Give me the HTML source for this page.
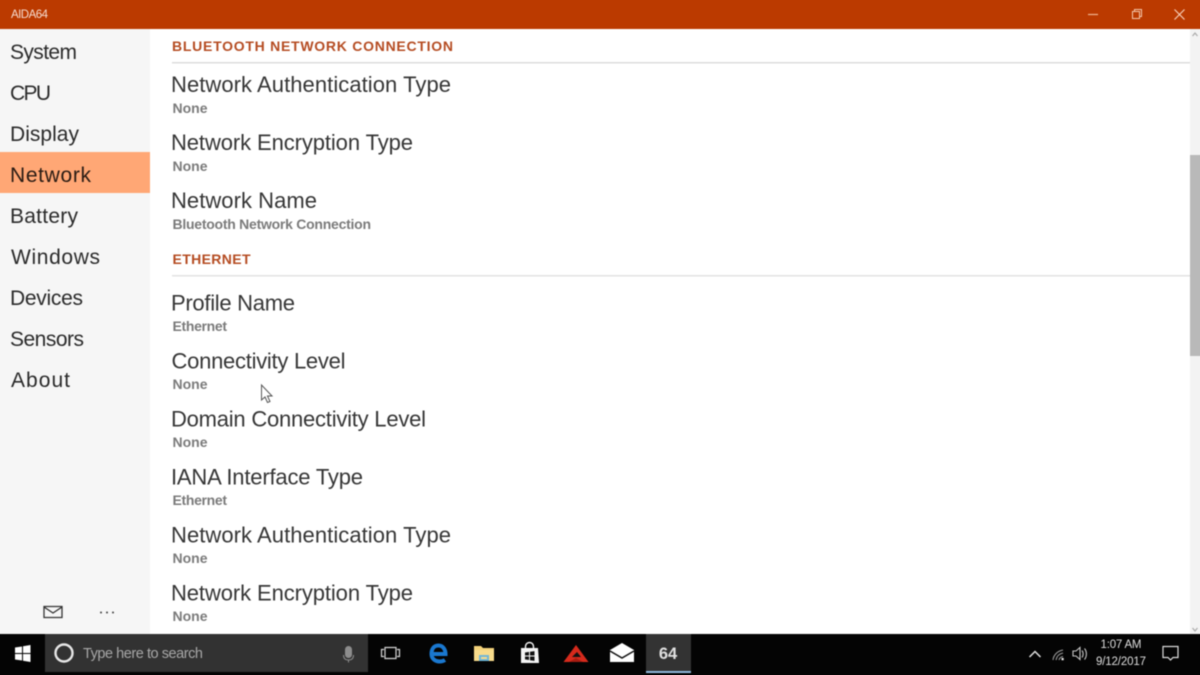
<!DOCTYPE html>
<html><head><meta charset="utf-8"><title>AIDA64</title>
<style>
html,body{margin:0;padding:0;background:#fff;width:1200px;height:675px;overflow:hidden}
svg{display:block}
text{font-family:"Liberation Sans",sans-serif}
.n{font-size:21px;fill:#2b2b2b}
.t{font-size:22px;fill:#363636}
.v{font-size:14px;font-weight:bold;fill:#7b7b7b}
.h{font-size:14px;font-weight:bold;fill:#b54c22}
</style></head><body>
<svg width="1200" height="675" viewBox="0 0 1200 675" xmlns="http://www.w3.org/2000/svg">
<g style="filter:blur(.45px)">
<rect x="-10" y="-10" width="1220" height="695" fill="#fff"/>
<rect x="-10" y="-10" width="1220" height="39" fill="#bb3a00"/>
<text x="11" y="18" font-size="11.500" fill="#f6dccf" textLength="37" lengthAdjust="spacing">AIDA64</text>
<path d="M1088 14.500h10" stroke="#f0b48f" stroke-width="1.200"/>
<path d="M1132.500 11.500h7v7h-7zM1134.500 11.500v-2h7v7h-2" fill="none" stroke="#f3c6ab" stroke-width="1"/>
<path d="M1174.500 9.500l10 10M1184.500 9.500l-10 10" stroke="#f7cdb5" stroke-width="1.200"/>

<rect x="-10" y="29" width="160" height="605" fill="#f6f6f6"/>
<rect x="-10" y="152" width="160" height="41" fill="#ffa775"/>
<text class="n" x="10" y="59" textLength="67" lengthAdjust="spacing">System</text>
<text class="n" x="10" y="100" textLength="41" lengthAdjust="spacing">CPU</text>
<text class="n" x="10" y="141" textLength="69" lengthAdjust="spacing">Display</text>
<text class="n" x="10" y="182" textLength="81" lengthAdjust="spacing" style="fill:#2a1c14">Network</text>
<text class="n" x="10" y="223" textLength="68" lengthAdjust="spacing">Battery</text>
<text class="n" x="11" y="264" textLength="89" lengthAdjust="spacing">Windows</text>
<text class="n" x="10" y="305" textLength="73" lengthAdjust="spacing">Devices</text>
<text class="n" x="10" y="346" textLength="74" lengthAdjust="spacing">Sensors</text>
<text class="n" x="11" y="387" textLength="59" lengthAdjust="spacing">About</text>
<path d="M44 606.500h18v11h-18zM44 607l9 6 9-6" fill="none" stroke="#333" stroke-width="1.300"/>
<circle cx="101" cy="612.500" r="1" fill="#444"/><circle cx="107" cy="612.500" r="1" fill="#444"/><circle cx="113" cy="612.500" r="1" fill="#444"/>

<text class="h" x="172" y="51" textLength="281" lengthAdjust="spacing">BLUETOOTH NETWORK CONNECTION</text>
<rect x="172" y="62" width="1018" height="1.500" fill="#dcdcdc"/>
<text class="t" x="171" y="92" textLength="280" lengthAdjust="spacing">Network Authentication Type</text>
<text class="v" x="172.500" y="113" textLength="35" lengthAdjust="spacing">None</text>
<text class="t" x="171" y="150" textLength="242" lengthAdjust="spacing">Network Encryption Type</text>
<text class="v" x="172.500" y="171" textLength="35" lengthAdjust="spacing">None</text>
<text class="t" x="171" y="208" textLength="146" lengthAdjust="spacing">Network Name</text>
<text class="v" x="172.500" y="229" textLength="198.500" lengthAdjust="spacing">Bluetooth Network Connection</text>
<text class="h" x="172.500" y="264" textLength="78" lengthAdjust="spacing">ETHERNET</text>
<rect x="172" y="275" width="1018" height="1.500" fill="#e2e2e2"/>
<text class="t" x="171" y="310.500" textLength="124" lengthAdjust="spacing">Profile Name</text>
<text class="v" x="172.500" y="331" textLength="54.500" lengthAdjust="spacing">Ethernet</text>
<text class="t" x="171.500" y="368.500" textLength="174" lengthAdjust="spacing">Connectivity Level</text>
<text class="v" x="172.500" y="389" textLength="35" lengthAdjust="spacing">None</text>
<text class="t" x="171" y="426.500" textLength="255" lengthAdjust="spacing">Domain Connectivity Level</text>
<text class="v" x="172.500" y="447" textLength="35" lengthAdjust="spacing">None</text>
<text class="t" x="171" y="484.500" textLength="192" lengthAdjust="spacing">IANA Interface Type</text>
<text class="v" x="172.500" y="505" textLength="54.500" lengthAdjust="spacing">Ethernet</text>
<text class="t" x="171" y="542.500" textLength="280" lengthAdjust="spacing">Network Authentication Type</text>
<text class="v" x="172.500" y="563" textLength="35" lengthAdjust="spacing">None</text>
<text class="t" x="171" y="600.500" textLength="242" lengthAdjust="spacing">Network Encryption Type</text>
<text class="v" x="172.500" y="621" textLength="35" lengthAdjust="spacing">None</text>

<path d="M261.500 385v15l3.500-3 2.500 5.500 2.500-1-2.500-5.500h4.500z" fill="#fff" stroke="#555" stroke-width="1"/>

<rect x="1190" y="29" width="20" height="605" fill="#f3f3f3"/>
<rect x="1190" y="155" width="20" height="201" fill="#b9b9b9"/>
<path d="M1192.500 36l2.500-3 2.500 3" fill="none" stroke="#aaa" stroke-width="1.200"/>
<path d="M1192.500 628l2.500 3 2.500-3" fill="none" stroke="#aaa" stroke-width="1.200"/>

<rect x="-10" y="634" width="1220" height="51" fill="#040404"/>
<path d="M15 647.500l7-1v6.500h-7zM23 646.300l7.500-1.300v8h-7.500zM15 654h7v6.500l-7-1zM23 654h7.500v8l-7.500-1.300z" fill="#fff"/>
<rect x="45" y="634" width="323" height="38" fill="#323232"/>
<circle cx="64" cy="653" r="8.500" fill="none" stroke="#e6e6e6" stroke-width="2.400"/>
<text x="83" y="658" font-size="14.500" fill="#a8a8a8" textLength="120" lengthAdjust="spacing">Type here to search</text>
<rect x="345" y="646" width="7" height="12" rx="3.500" fill="#8d8d8d"/>
<path d="M343.500 655c0 4 2.500 5 5 5s5-1 5-5M348.500 660v2.500" fill="none" stroke="#8d8d8d" stroke-width="1"/>
<path d="M385 647.500h11v11h-11zM384 649.500h-2.500v7h2.500M397 649.500h2.500v7h-2.500" fill="none" stroke="#d5d5d5" stroke-width="1.200"/>

<path d="M432.500 654h13c0-5-3-8.500-7-8.500-5 0-7 4-7 8.500 0 5 4 7.500 8 7.500 2 0 4-.5 5.500-1.500" fill="none" stroke="#1a78d0" stroke-width="4"/>

<path d="M474 646h7l2 2h11v5h-20z" fill="#f3d27a"/>
<rect x="474" y="650" width="20" height="11" fill="#f8dc8c"/>
<rect x="479" y="655" width="10" height="6" fill="#6fb7d8"/>
<rect x="481" y="657" width="6" height="2" fill="#f8dc8c"/>

<path d="M521 648h17l1 15h-18z" fill="#f4f4f4"/>
<path d="M525.500 649v-2.500a4 4 0 0 1 8 0v2.500" fill="none" stroke="#f4f4f4" stroke-width="1.400"/>
<path d="M525 652.500l4-.6v3.600h-4zM530 651.800l4.500-.7v4.400h-4.500zM525 656.500h4v3.500l-4-.6zM530 656.500h4.500v4.400l-4.500-.7z" fill="#111"/>

<path d="M576 645l12.500 17h-25z" fill="#d62a1c"/>
<path d="M572 657l5-5 4 5z" fill="#111"/>
<path d="M569 662l7-4 7 4z" fill="#a81c12"/>

<path d="M610 650l12-7 12 7v12h-24z" fill="#fff"/>
<path d="M610 651l12 7 12-7" fill="none" stroke="#111" stroke-width="1.500"/>

<rect x="646" y="634" width="45" height="37" fill="#333"/>
<rect x="646" y="671" width="45" height="2" fill="#8fb8dc"/>
<text x="668" y="659" font-size="16.500" font-weight="bold" text-anchor="middle" fill="#e0e0e0">64</text>

<path d="M1029.500 657l5.500-5.500 5.500 5.500" fill="none" stroke="#e2e2e2" stroke-width="1.500"/>
<path d="M1053 660c.5-5 4.500-9 10-10M1056 660c.5-3 2.500-6 7-7M1059 660c.3-1.500 1.500-3 4-3.500" fill="none" stroke="#9c9c9c" stroke-width="1.100"/>
<rect x="1061.500" y="658" width="2.200" height="2.200" fill="#eee"/>
<path d="M1073 651h3l4-3.500v12l-4-3.500h-3z" fill="none" stroke="#c8c8c8" stroke-width="1.100"/>
<path d="M1082 650.500c1.500 2 1.500 5 0 7M1084.500 648.500c2.500 3 2.500 8 0 11" fill="none" stroke="#c8c8c8" stroke-width="1.100"/>
<text x="1121" y="648" font-size="11.500" text-anchor="middle" fill="#dedede" textLength="41" lengthAdjust="spacing">1:07 AM</text>
<text x="1121" y="665" font-size="11.500" text-anchor="middle" fill="#dedede" textLength="50" lengthAdjust="spacing">9/12/2017</text>
<path d="M1163 646.500h15v11h-5l-2.500 2.500-2.500-2.500h-5z" fill="none" stroke="#dcdcdc" stroke-width="1.200"/>
</g>
</svg>
</body></html>
